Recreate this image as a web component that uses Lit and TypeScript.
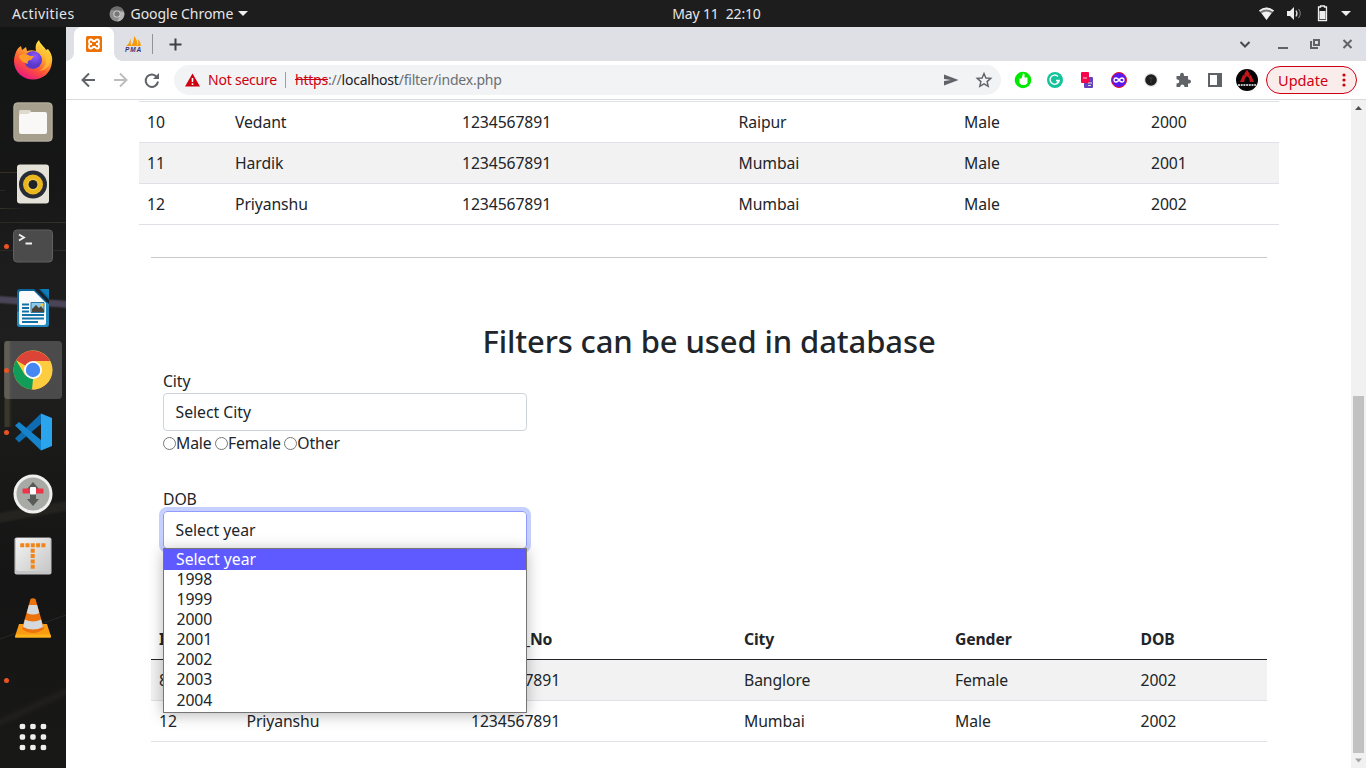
import { LitElement, html, css } from "lit";
import { customElement } from "lit/decorators.js";

const rows1 = [
  ["10", "Vedant", "1234567891", "Raipur", "Male", "2000"],
  ["11", "Hardik", "1234567891", "Mumbai", "Male", "2001"],
  ["12", "Priyanshu", "1234567891", "Mumbai", "Male", "2002"],
];
const rows2 = [
  ["8", "", "1234567891", "Banglore", "Female", "2002"],
  ["12", "Priyanshu", "1234567891", "Mumbai", "Male", "2002"],
];
const years = ["Select year", "1998", "1999", "2000", "2001", "2002", "2003", "2004"];

const firefox = html`<svg viewBox="0 0 40 40"><defs>
<linearGradient id="f1" x1=".8" y1="0" x2=".25" y2="1"><stop offset="0" stop-color="#fff44f"/><stop offset=".35" stop-color="#ffb031"/><stop offset=".65" stop-color="#ff5634"/><stop offset="1" stop-color="#e8128a"/></linearGradient>
<radialGradient id="f2" cx=".6" cy=".3"><stop offset="0" stop-color="#9059ff"/><stop offset="1" stop-color="#5a38c8"/></radialGradient></defs>
<path fill="url(#f1)" d="M3 12C4 9 6 7 8 6l1 4 4-3 1 4c3-1 6-1 9 0-1-5 0-8 3-11 1 4 5 6 7 10l2-1c3 4 5 8 4 13C38 33 30 39.500 20 39.500S1 32 1 21c0-4 1-6 2-9z"/>
<circle cx="20" cy="20" r="9" fill="url(#f2)"/>
<path fill="#ff9b29" d="M6 16c4-3 8-2 11 0l4 0-3 4c-3 0-4 2-3 4-4-1-8-3-9-8z"/><path fill="#ffc233" d="M25 3c1 7 8 9 8 17 0 6-3 9-7 11 10-1 13-9 11-16-2-5-10-7-12-12z" opacity=".75"/></svg>`;
const files = html`<svg viewBox="0 0 40 40"><rect x=".5" y=".5" width="39" height="39" rx="4" fill="#9b9482"/><rect x="1" y="1" width="38" height="38" rx="3.500" fill="#a69f8d" stroke="#b6b0a0"/><path d="M6 11V9.500Q6 8 7.500 8h9Q18 8 18 9.500V13H6z" fill="#dedace"/><path d="M6 14q0-2 2-2h7l3-2h14q2 0 2 2v18q0 2-2 2H8q-2 0-2-2z" fill="#f9f8f7"/></svg>`;
const rhythm = html`<svg viewBox="0 0 40 40"><rect x="4" y=".5" width="32" height="39" rx="3" fill="#e3e1d8"/><circle cx="20" cy="20.500" r="14" fill="#272b35"/><circle cx="20" cy="20.500" r="10" fill="#eab71e"/><circle cx="20" cy="20.500" r="5.500" fill="#f5d052"/><circle cx="20" cy="20.500" r="4.500" fill="#202329"/></svg>`;
const terminal = html`<svg viewBox="0 0 40 40"><rect x=".5" y="4" width="39" height="32" rx="3.500" fill="#4b4b4b" stroke="#606060"/><path d="M6 8.500l5 3-5 3M12.500 17.500H19" fill="none" stroke="#f2f2f2" stroke-width="1.800"/></svg>`;
const writer = html`<svg viewBox="0 0 40 40"><path d="M7 1h28q1 0 1 1v34q0 3-3 3H7q-3 0-3-3V4q0-3 3-3z" fill="#0b659b"/><path d="M36 14v22q0 3-3 3H7q-3 0-3-3V24z" fill="#2388be"/><path d="M8 3h13l12 12v20q0 2-2 2H8q-2 0-2-2V5q0-2 2-2z" fill="#fafafa"/><path d="M21 1h5l10 11v4z" fill="#18222d"/><path d="M28 1h8v9z" fill="#0f7db8"/><path d="M9 16.500h7M9 20h7M9 23.500h7M9 27h22M9 30.500h22M9 34h16" stroke="#1272a8" stroke-width="1.800"/><path d="M18 14.500h13v10H18z" fill="#8ec8e9" stroke="#2879a5"/><path d="M19 24v-3l4-4 3 3 2-2 3 4v2z" fill="#4a443b"/><circle cx="29" cy="17" r="1.500" fill="#ffc52b"/></svg>`;
const chrome = html`<svg viewBox="0 0 40 40"><circle cx="20" cy="20" r="19.500" fill="#fdcc3f"/><path d="M20 20L3.100 10.300A19.500 19.500 0 0 1 37 11z" fill="#db4437"/><path d="M3.100 10.300L12 25l8 4-1 10.500A19.500 19.500 0 0 1 3.100 10.300z" fill="#109d58"/><path d="M20 11h17a19.500 19.500 0 0 1-17.500 28.500L28 25z" fill="#fdcc3f"/><circle cx="20" cy="20" r="9" fill="#fff"/><circle cx="20" cy="20" r="7.200" fill="#4587f3"/></svg>`;
const vscode = html`<svg viewBox="0 0 40 40"><path d="M2 26.500L28 1.500V12L6 30.500z" fill="#0d6db0"/><path d="M2 13.500L6 10l22 18v10.500z" fill="#1684cd"/><path d="M28 1.500L39 6v28l-11 4.500z" fill="#2ba4ee"/></svg>`;
const remote = html`<svg viewBox="0 0 40 40"><circle cx="20" cy="20" r="18" fill="#a7aaa5" stroke="#efefef" stroke-width="3"/><path d="M20 8l6 7h-3v10h3l-6 7-6-7h3V15h-3z" fill="#585b58"/><rect x="9.500" y="14.500" width="21" height="5" rx="1" fill="#ed354a"/><rect x="17" y="13" width="6" height="7.500" rx="1" fill="#fff"/></svg>`;
const typora = html`<svg viewBox="0 0 40 40"><defs><linearGradient id="t" x1="0" y1="0" x2="1" y2="1"><stop stop-color="#f4f4f4"/><stop offset="1" stop-color="#c7c7c7"/></linearGradient></defs><rect x="1.500" y="1.500" width="37" height="37" rx="2" fill="#c5c5c5"/><rect x="3" y="2" width="34" height="33" rx="2" fill="url(#t)"/><path d="M7.200 9.200h25.200M19.700 12.800v21" stroke="#f28519" stroke-width="4" stroke-dasharray="4 1.300" fill="none"/></svg>`;
const vlc = html`<svg viewBox="0 0 40 40"><path d="M6 26h28l4 12.500q0 1-1 1H3q-1 0-1-1z" fill="#fb9b12"/><path d="M3 36.500h34.500l.5 3H2z" fill="#ffb31b"/><path d="M17.500 1q2.500-1.500 5 0L31 31q-11 8-22 0z" fill="#ec720c"/><path d="M15.900 7h8.200l2.200 8q-6.300 3-12.600 0zM11.900 21.500q8 4 16.200 0L30 29q-10 5-20 0z" fill="#d5d8dc"/></svg>`;

const dock: [unknown, string][] = [
  [firefox, ""], [files, ""], [rhythm, ""], [terminal, "dot"], [writer, ""], [chrome, "dot active"],
  [vscode, "dot"], [remote, ""], [typora, ""], [vlc, ""], ["", "dot"],
];

@customElement("app-root")
export class AppRoot extends LitElement {
  static styles = css`
    :host { display: block; width: 1366px; height: 768px; overflow: hidden; background: #fff; color: #212529;
      font: 400 15.75px/24px "Noto Sans", "Open Sans", sans-serif; letter-spacing: -0.1px; }
    * { box-sizing: border-box; }
    svg { display: block; flex: none; }
    .top { height: 27px; background: #1d1d1d; color: #e6e6e6; display: grid; grid-template-columns: 1fr auto 1fr; align-items: center; font-size: 14px; line-height: 27px; letter-spacing: -0.05px; }
    .left { display: flex; align-items: center; padding-left: 12px; }
    .act { letter-spacing: .42px; }
    .chr { margin: 0 6px 0 34px; }
    .caret { border: 5px solid transparent; border-top-color: #eee; border-bottom: 0; margin-left: 5px; }
    .clock { white-space: pre; padding-left: 67px; letter-spacing: -.15px; }
    .status { display: flex; align-items: center; justify-content: flex-end; padding-right: 15px; }
    .status .caret { margin-left: 5px; border-width: 5px 5px 0; }
    .under { display: flex; height: 741px; }
    .dock { width: 66px; flex: none; padding-top: 2px; display: flex; flex-direction: column;
      background:
        linear-gradient(#35301f, #35301f) 0 145px / 18px 1px no-repeat,
        linear-gradient(#2b2921, #2b2921) 0 163px / 5px 1px no-repeat,
        linear-gradient(90deg, #35322a, #1b1b19) 0 181px / 24px 1px no-repeat,
        linear-gradient(90deg, #2a2822, #34312a) 0 195px / 66px 1px no-repeat,
        linear-gradient(90deg, #2a2822, #2f2d27) 0 223px / 66px 1px no-repeat,
        linear-gradient(184deg, transparent 30%, #4a4456 42% 62%, transparent 74%) 0 266px / 66px 17px no-repeat,
        linear-gradient(90deg, #1a1a18 0 4px, #3a372b 5px 9px, #262520 10px 11px, transparent 12px) 0 314px / 66px 86px no-repeat,
        linear-gradient(170deg, transparent 48%, #24231f 52% 60%, transparent 64%) 0 445px / 66px 70px no-repeat,
        linear-gradient(160deg, transparent 49%, #292927 50%, transparent 51%) 0 570px / 66px 60px no-repeat,
        linear-gradient(155deg, transparent 44%, #201f1d 50%, transparent 56%) 0 640px / 66px 80px no-repeat,
        linear-gradient(#131414, #161716 22%, #1b1c1b 30%, #201f20 45%, #191a18 58%, #151515 75%, #181817); }
    .app { width: 66px; height: 62px; display: grid; grid-template-columns: 13px 40px; align-items: center; }
    .app svg { width: 40px; height: 40px; grid-column: 2; }
    .app::before { content: ""; width: 5px; height: 5px; border-radius: 50%; margin-left: 4px; }
    .dot::before { background: #e95420; }
    .active { width: 58px; height: 58px; margin: 2px 4px; border-radius: 4px; background: rgba(255,255,255,.2); grid-template-columns: 9px 40px; }
    .active::before { margin-left: 0; }
    .grid { margin: 12px 0 0 19px; }
    .browser { flex: 1; min-width: 0; display: flex; flex-direction: column; }
    .tabs { height: 34px; background: #dfe0e5; display: flex; align-items: center; }
    .tab { margin-left: 8px; width: 40px; height: 34px; background: #fff; border-radius: 8px 8px 0 0; display: flex; align-items: center; justify-content: center; }
    .flare { align-self: flex-end; width: 8px; height: 8px; background: radial-gradient(circle at 100% 0, #dfe0e5 7.5px, #fff 8px); }
    .flare.l { margin-right: -8px; background: radial-gradient(circle at 0 0, #dfe0e5 7.5px, #fff 8px); }
    .pma { margin-left: 3px; }
    .sep { width: 1px; height: 20px; background: #909399; margin: 0 16px 0 10px; }
    .wins { margin-left: auto; }
    .bar { height: 39px; background: #fff; border-bottom: 1px solid #d9dadd; display: flex; align-items: center; }
    .nav { margin-left: 14px; }
    .omni { width: 827px; height: 30px; border-radius: 15px; background: #f1f3f4; margin-left: 14px; display: flex; align-items: center; padding-left: 11px; font-size: 14px; letter-spacing: -.22px; line-height: 30px; color: #6b6e73; }
    .warn { margin-right: 8px; }
    .red { color: #ce0010; }
    .vr { width: 1px; height: 16px; background: #9aa0a6; margin: 0 9px 0 8px; }
    s { color: #ce0010; } .host { color: #202124; }
    .omni .oi { margin-left: auto; margin-right: 8px; }
    .ext { margin-left: 13px; }
    .update { width: 91px; height: 28px; margin-left: 7px; border: 1px solid #ce0010; border-radius: 14px; background: #fbecec; color: #ce0010; font-size: 14.5px; display: flex; align-items: center; padding-left: 11px; letter-spacing: .05px; }
    .update svg { margin-left: auto; margin-right: 10px; }
    .view { flex: 1; min-height: 0; display: flex; }
    .page { flex: 1; overflow: hidden; padding: 1px 72px 0 73px; display: flow-root; }
    table { border-collapse: separate; border-spacing: 0; table-layout: fixed; }
    td, th { height: 41px; padding: 0 8px; border-bottom: 1px solid #dee2e6; text-align: left; white-space: nowrap; line-height: 24px; }
    .one { width: 1140px; border-top: 1px solid #dee2e6; }
    .striped tr:nth-child(even) td, .two tbody tr:first-child td { background: #f2f2f2; }
    hr { border: 0; height: 1px; background: #c8c9ca; margin: 32px 12px 0; }
    h2 { margin: 64px 12px 9px; font-size: 31px; line-height: 38px; font-weight: 500; text-align: center; letter-spacing: -.1px; }
    .form { width: 364px; margin-left: 24px; position: relative; }
    .select { height: 38px; border: 1px solid #ced4da; border-radius: 4px; padding: 6px 11.5px; letter-spacing: 0; }
    .focus { border-color: #919bff; box-shadow: 0 0 0 4px #c6d0fe; }
    .radios { display: flex; align-items: center; gap: 3.5px; margin-bottom: 32px; letter-spacing: -.13px; }
    .radios label { display: flex; align-items: center; }
    .radios i { width: 13px; height: 13px; border: 1px solid #767676; border-radius: 50%; }
    .menu { position: absolute; left: 0; top: 179px; width: 364px; height: 165px; background: #fff; border: 1px solid #767676; box-shadow: 0 2px 14px rgba(0,0,0,.28); z-index: 2; }
    .opt { height: 20.1px; line-height: 19px; padding-left: 12.5px; }
    .opt:first-child { height: 21px; line-height: 20px; background: #5e5aff; color: #fff; padding-left: 12px; letter-spacing: 0; }
    .two { width: 1116px; margin: 70px 0 0 12px; }
    .two th { border-color: #212529; font-weight: 700; letter-spacing: -.15px; }
    .scroll { width: 15px; background: #f1f1f1; display: flex; flex-direction: column; align-items: center; }
    .thumb { width: 11px; height: 357px; background: #c1c1c1; margin-top: 280px; }
  `;

  private cols(w: number[]) {
    return html`<colgroup>${w.map((v) => html`<col width=${v} />`)}</colgroup>`;
  }

  render() {
    return html`
      <div class="top">
        <div class="left"><span class="act">Activities</span>
          <svg class="chr" width="16" height="16" viewBox="0 0 16 16"><circle cx="8" cy="8" r="7.500" fill="#8b8b8b"/><path d="M1.500 4A7.500 7.500 0 0 1 14.600 4.500H8z" fill="#6c6c6c"/><path d="M15 6a7.500 7.500 0 0 1-7 9.500l3.500-6V5.500z" fill="#b4b4b4"/><circle cx="8" cy="8" r="3.600" fill="#ddd"/><circle cx="8" cy="8" r="2.700" fill="#777"/></svg>
          <span>Google Chrome</span><i class="caret"></i></div>
        <div class="clock">May 11  22:10</div>
        <div class="status">
          <svg width="78" height="17" viewBox="0 0 78 17"><path d="M1 5.500Q8.500-.5 16 5.500L8.500 15z" fill="#777"/><path d="M1 5.500Q8.500-.5 16 5.500l-1 1.200Q8.500 2.500 2 6.700z" fill="#eee"/><path d="M3.500 8q5-3 10 0l-5 7z" fill="#f3f3f3"/><path d="M29 6h3l4-4v13l-4-4h-3z" fill="#eee"/><path d="M38 5.500q2 3 0 6" stroke="#ddd" fill="none" stroke-width="1.300"/><path d="M40.500 4q3.500 4.500 0 9" stroke="#888" fill="none"/><path d="M60.500 2h2V1h4v1h2v13.500h-8z" fill="none" stroke="#eee" stroke-width="1.300"/><path d="M61.500 6h6v8h-6z" fill="#eee"/></svg>
          <i class="caret"></i></div>
      </div>
      <div class="under">
        <div class="dock">
          ${dock.map(([icon, c]) => html`<div class="app ${c}">${icon}</div>`)}
          <svg class="grid" width="28" height="28" viewBox="0 0 28 28">${[3.5, 14, 24.5].map((y) => html`<svg y=${y - 3} width="28" height="6"><rect x=".7" y=".2" width="5.500" height="5.500" rx="1.800" fill="#eee"/><rect x="11.200" y=".2" width="5.500" height="5.500" rx="1.800" fill="#eee"/><rect x="21.700" y=".2" width="5.500" height="5.500" rx="1.800" fill="#eee"/></svg>`)}</svg>
        </div>
        <div class="browser">
          <div class="tabs">
            <i class="flare l"></i>
            <div class="tab"><svg width="16" height="16" viewBox="0 0 16 16"><rect width="16" height="16" rx="1.500" fill="#ec7208"/><g fill="none" stroke="#fff" stroke-width="1.800" stroke-linejoin="round"><path d="M6 7.800H4.800Q3 7.800 3 5.800 3 3.500 4.800 3.500 6.300 3.500 7 5h2q.7-1.500 2.200-1.500Q13 3.500 13 5.800q0 2-1.800 2H10M6 8.200H4.800Q3 8.200 3 10.200q0 2.300 1.800 2.300Q6.300 12.500 7 11h2q.7 1.500 2.200 1.500 1.800 0 1.800-2.300 0-2-1.800-2H10"/></g></svg></div>
            <i class="flare"></i>
            <svg class="pma" width="17" height="16" viewBox="0 0 17 16"><path d="M1 10Q5 7 5.500 2l.5 8zM6 10Q9 6 9 0q4 4 3 10zM12 10q2-3 1-7 3 3 3 7z" fill="#f69c0c"/><text x="0" y="15.500" font-family="Liberation Sans" font-size="6.500" font-weight="700" font-style="italic" textLength="16" fill="#3b3170">PMA</text></svg>
            <i class="sep"></i>
            <svg width="13" height="13" viewBox="0 0 13 13"><path d="M6.500.5v12M.5 6.500h12" stroke="#3c4043" stroke-width="2"/></svg>
            <svg class="wins" width="127" height="34" viewBox="0 0 127 34"><g fill="none" stroke="#5f6368" stroke-width="2"><path d="M1.500 15l4.500 4.500 4.500-4.500" stroke="#46494d"/><path d="M39 21h10"/><path d="M75 13h5v5h-5zM72 14v7h7" stroke-width="2"/><path d="M104.500 13l8 8M112.500 13l-8 8"/></g></svg>
          </div>
          <div class="bar">
            <svg class="nav" width="80" height="18" viewBox="0 0 80 18"><path d="M15 9H2.500M9 2.500L2.500 9 9 15.500" fill="none" stroke="#5f6368" stroke-width="1.900"/><path d="M34 9h12.500M40 2.500L46.500 9 40 15.500" fill="none" stroke="#babcbe" stroke-width="1.900"/><path d="M77 6.200A6.200 6.200 0 1 0 78 10.500" fill="none" stroke="#5f6368" stroke-width="2"/><path d="M79 2v6h-6z" fill="#5f6368"/></svg>
            <div class="omni">
              <svg class="warn" width="15" height="14" viewBox="0 0 15 14"><path d="M7.500.5L15 13.500H0z" fill="#ce0010"/><path d="M7.500 5v4M7.500 10.200v1.800" stroke="#fff" stroke-width="1.600"/></svg>
              <span class="red">Not secure</span><i class="vr"></i><span><s>https</s>://<span class="host">localhost</span>/filter/index.php</span>
              <svg class="oi" width="50" height="18" viewBox="0 0 50 18"><path d="M1 3.500L15.500 9 1 14.500V10l7-1-7-1z" fill="#5f6368"/><path d="M41 2.500l1.900 4.500 4.900.4-3.700 3.200 1.100 4.700L41 12.800l-4.200 2.500 1.100-4.700-3.700-3.200 4.900-.4z" fill="none" stroke="#5f6368" stroke-width="1.400"/></svg>
            </div>
            <svg class="ext" width="245" height="24" viewBox="0 0 245 24"><circle cx="9" cy="12" r="8.300" fill="#00e900"/><path d="M5.500 10.500h2L9 5.500l1.500.5v3.500h3V15l-2 2H7.500l-2-2z" fill="#fff"/><circle cx="41" cy="12" r="8" fill="#15c39a"/><path d="M44 8.500a4.600 4.600 0 1 0 1.200 4H42M43 15l2-2.500" fill="none" stroke="#fff" stroke-width="1.400"/><rect x="70" y="9" width="9" height="11" rx="1" fill="#6342bd"/><rect x="67" y="4" width="8" height="11" rx="1" fill="#f7054a"/><path d="M74 15h4M74 17.500h3M69 10h4" stroke="#ddd"/><circle cx="105" cy="12" r="7.500" fill="#5918f2" stroke="#ee1020"/><path d="M105 12c-2-3-5-2.500-5 0s3 3 5 0 5-2.500 5 0-3 3-5 0z" fill="none" stroke="#fff" stroke-width="1.400"/><circle cx="137" cy="12" r="7" fill="#e7e7e7"/><circle cx="137" cy="12" r="5.800" fill="#1d1f21"/><path d="M135 10h4M137 10v5" stroke="#3c3c3c"/><path d="M162.500 8h3.500c-.5-4.500 4.500-4.500 4 0H174v3.500c4-.5 4 4.500 0 4V19h-3.500c0-3.500-4.300-3.500-4.300 0h-3.700v-3.500c3.700 0 3.700-4.300 0-4.300z" fill="#5f6368"/><path d="M195 6h12v12h-12z" fill="none" stroke="#5f6368" stroke-width="2"/><path d="M203 5h5v14h-5z" fill="#5f6368"/><circle cx="233" cy="12" r="11" fill="#050505"/><path d="M233 1.500l3 5-3 2-3-2zM229 7l-3 7h4l1-4 2-2zM237 7l3 7h-4l-1-4-2-2z" fill="#c5161c"/><path d="M224 17h18" stroke="#bbb" stroke-width="2" stroke-dasharray="2 .7"/></svg>
            <div class="update">Update<svg width="4" height="14" viewBox="0 0 4 14" fill="#ce0010"><circle cx="2" cy="2" r="1.600"/><circle cx="2" cy="7" r="1.600"/><circle cx="2" cy="12" r="1.600"/></svg></div>
          </div>
          <div class="view">
            <div class="page">
              <table class="one striped">${this.cols([88, 227, 276.5, 225.5, 187, 136])}<tbody>${rows1.map((r) => html`<tr>${r.map((c) => html`<td>${c}</td>`)}</tr>`)}</tbody></table>
              <hr />
              <h2>Filters can be used in database</h2>
              <div class="form">
                <div>City</div>
                <div class="select">Select City</div>
                <div class="radios">${["Male", "Female", "Other"].map((g) => html`<label><i></i>${g}</label>`)}</div>
                <div>DOB</div>
                <div class="select focus">Select year</div>
                <div class="menu">${years.map((y) => html`<div class="opt">${y}</div>`)}</div>
              </div>
              <table class="two">${this.cols([87.5, 224.5, 273, 211, 185.5, 134.5])}
                <thead><tr>${["ID", "", "Mobile_No", "City", "Gender", "DOB"].map((h) => html`<th>${h}</th>`)}</tr></thead>
                <tbody>${rows2.map((r) => html`<tr>${r.map((c) => html`<td>${c}</td>`)}</tr>`)}</tbody></table>
            </div>
            <div class="scroll">
              <svg width="15" height="16" viewBox="0 0 15 16"><path d="M4 10l3.500-4 3.500 4z" fill="#505050"/></svg>
              <div class="thumb"></div>
              <svg width="15" height="15" viewBox="0 0 15 15"><path d="M4 5.500l3.500 4 3.500-4z" fill="#a3a3a3"/></svg>
            </div>
          </div>
        </div>
      </div>`;
  }
}
